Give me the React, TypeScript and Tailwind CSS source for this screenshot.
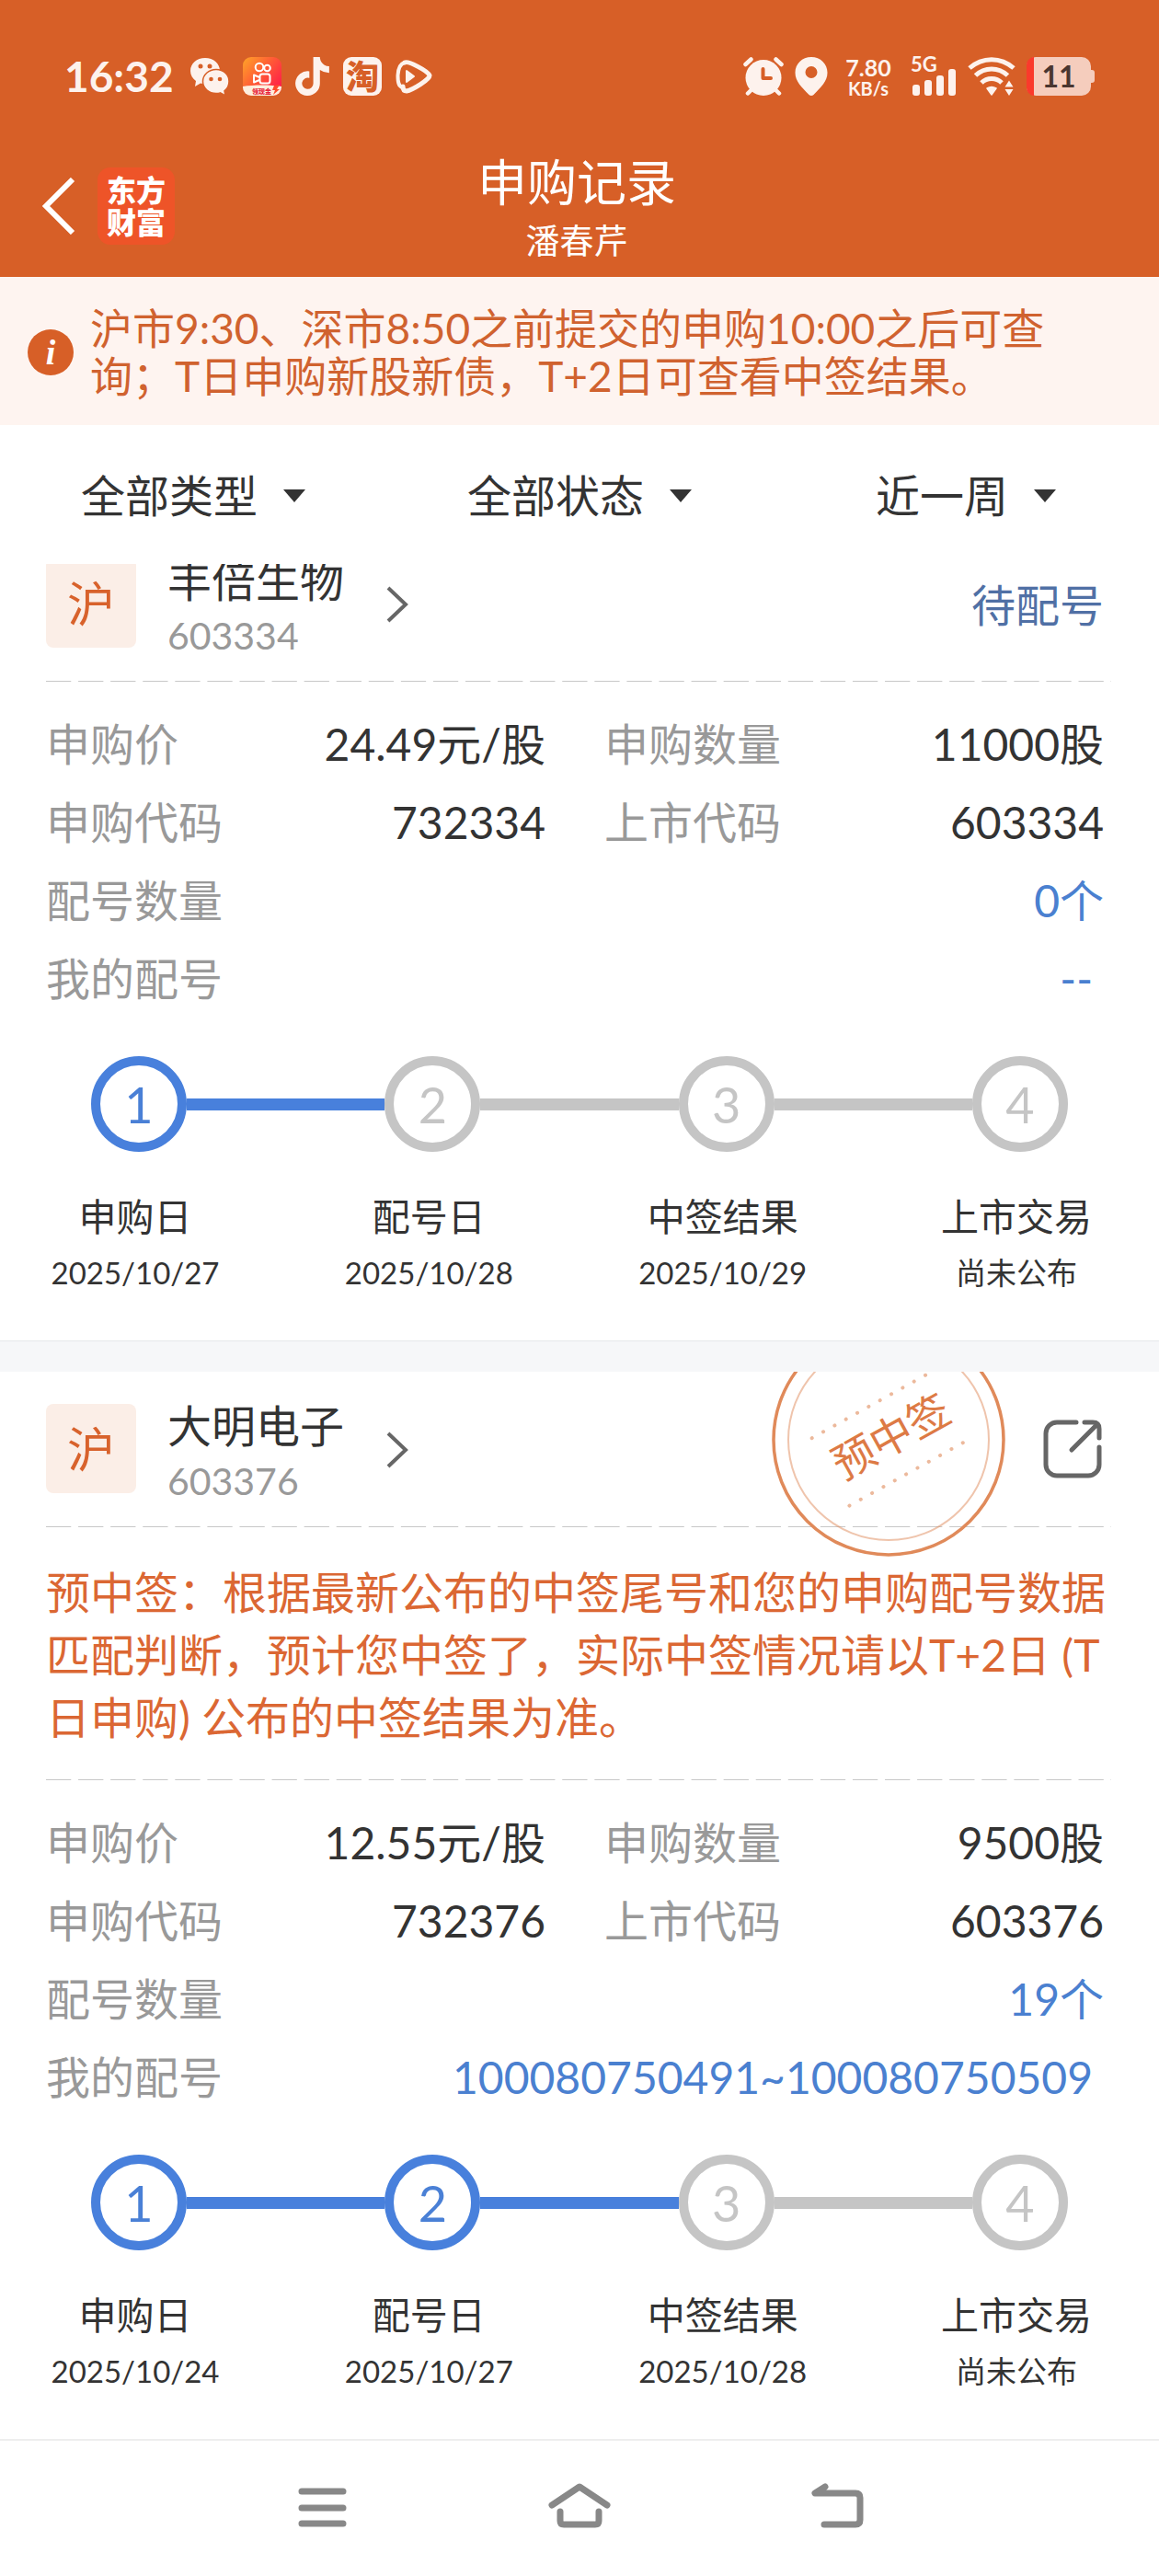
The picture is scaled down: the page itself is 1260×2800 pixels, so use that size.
import { useState } from "react";
import { FaTiktok } from "react-icons/fa6";

interface Step {
  label: string;
  date: string;
}

interface Subscription {
  name: string;
  code: string;
  price: string;
  amount: string;
  applyCode: string;
  lotCount: string;
  lots: string;
  status?: string;
  preWon?: boolean;
  notice?: string;
  currentStep: number;
  steps: Step[];
}

const subscriptions: Subscription[] = [
  {
    name: "丰倍生物",
    code: "603334",
    price: "24.49元/股",
    amount: "11000股",
    applyCode: "732334",
    lotCount: "0个",
    lots: "--",
    status: "待配号",
    currentStep: 1,
    steps: [
      { label: "申购日", date: "2025/10/27" },
      { label: "配号日", date: "2025/10/28" },
      { label: "中签结果", date: "2025/10/29" },
      { label: "上市交易", date: "尚未公布" },
    ],
  },
  {
    name: "大明电子",
    code: "603376",
    price: "12.55元/股",
    amount: "9500股",
    applyCode: "732376",
    lotCount: "19个",
    lots: "100080750491~100080750509",
    preWon: true,
    notice:
      "预中签：根据最新公布的中签尾号和您的申购配号数据匹配判断，预计您中签了，实际中签情况请以T+2日 (T日申购) 公布的中签结果为准。",
    currentStep: 2,
    steps: [
      { label: "申购日", date: "2025/10/24" },
      { label: "配号日", date: "2025/10/27" },
      { label: "中签结果", date: "2025/10/28" },
      { label: "上市交易", date: "尚未公布" },
    ],
  },
];

const filters = [
  { label: "类型", options: ["全部类型", "新股", "新债"] },
  { label: "状态", options: ["全部状态", "待配号", "已中签"] },
  { label: "时间", options: ["近一周", "近一月", "近一年"] },
];

function WechatIcon() {
  return (
    <svg viewBox="0 0 42 42" className="size-[42px]">
      <path d="M16 1C7 1 0 7 0 15c0 4.500 2.300 8.300 6 11l-1 6 6-3.500c1.600.4 3.300.5 5 .5 9 0 16-6 16-14S25 1 16 1z" fill="#fdf2ed" />
      <path d="M28 13.500c-8 0-14.500 5.700-14.500 13S20 39.500 28 39.500c1.500 0 3-.2 4.400-.6l5.600 3-1-5c3-2.400 5-6 5-10.400 0-7.300-6-13-14-13z" fill="#fdf2ed" stroke="#d75f27" strokeWidth="1.500" />
      <g fill="#d75f27">
        <circle cx="11" cy="10" r="2.500" />
        <circle cx="21" cy="10" r="2.500" />
        <circle cx="22.500" cy="24" r="2.300" />
        <circle cx="32" cy="24" r="2.300" />
      </g>
    </svg>
  );
}

function KuaishouIcon() {
  return (
    <svg viewBox="0 0 42 42" className="size-[42px]">
      <defs>
        <linearGradient id="ks" x1="0" y1="0" x2="1" y2="0.800">
          <stop offset="0" stopColor="#ffa628" />
          <stop offset="0.500" stopColor="#ff5a36" />
          <stop offset="1" stopColor="#ff1a4a" />
        </linearGradient>
      </defs>
      <rect width="42" height="42" rx="9" fill="url(#ks)" />
      <path d="M0 32c12-2 30-2 42 0v1a9 9 0 0 1-9 9H9a9 9 0 0 1-9-9z" fill="#fdeedd" />
      <g fill="none" stroke="#fff" strokeWidth="2">
        <circle cx="18" cy="11" r="4.300" />
        <circle cx="26.500" cy="12" r="3.300" />
        <rect x="18.500" y="18.500" width="11" height="10" rx="2.500" />
        <path d="M18 22l-6-2.500v8l6-2.500" strokeLinejoin="round" />
      </g>
      <text x="10" y="40" fontSize="7" fontWeight="900" fill="#e8273c">领现金</text>
      <path d="M34 31l6-1-3 5h3l-7 6 2-5h-3z" fill="#ff4a2c" />
    </svg>
  );
}

function VideoIcon() {
  return (
    <svg viewBox="0 0 40 38" className="h-[38px] w-10" fill="none" stroke="#fdf2ed" strokeWidth="5" strokeLinejoin="round" strokeLinecap="round">
      <path d="M10 4c4-2 25 9 27 14 1 4-19 16-25 17-3 0-4-2-4-5" />
      <path d="M10 4C6 5 3 9 2.500 18c0 8 1 12 5 13" strokeWidth="4" />
      <path d="M12 13v12l8-6z" fill="#fdf2ed" strokeWidth="2" />
    </svg>
  );
}

function AlarmIcon() {
  return (
    <svg viewBox="0 0 44 42" className="h-[42px] w-11" fill="none" stroke="#fdf2ed" strokeWidth="4.500" strokeLinecap="round">
      <circle cx="22" cy="22.500" r="19.500" fill="#fdf2ed" stroke="none" />
      <path d="M2.500 8l6-5.500M41.500 8l-6-5.500M5 39.500l4-4M39 39.500l-4-4" />
      <path d="M21.500 13v10h8.500" stroke="#d75f27" strokeWidth="4" strokeLinejoin="round" />
    </svg>
  );
}

function PinIcon() {
  return (
    <svg viewBox="0 0 36 42" className="h-[42px] w-9">
      <path fillRule="evenodd" d="M18 0C8 0 .5 7.500.5 17c0 9.500 7 15.500 15 24 1.500 1.300 3.500 1.300 5 0 8-8.500 15-14.500 15-24C35.500 7.500 28 0 18 0zm0 10a6.500 6.500 0 1 1 0 13 6.500 6.500 0 0 1 0-13z" fill="#fdf2ed" />
    </svg>
  );
}

function SignalIcon() {
  return (
    <svg viewBox="0 0 50 42" className="h-[42px] w-[50px] overflow-visible" fill="#fdf2ed">
      <text x="0" y="16" fontSize="22" fontWeight="700">5G</text>
      <rect x="2" y="30" width="8" height="12" rx="3" />
      <rect x="15" y="25" width="8" height="17" rx="3" />
      <rect x="28" y="20" width="8" height="22" rx="3" />
      <rect x="41" y="13" width="8" height="29" rx="3" />
    </svg>
  );
}

function WifiIcon() {
  return (
    <svg viewBox="0 0 52 42" className="h-[42px] w-[52px]" fill="none" stroke="#fdf2ed" strokeWidth="5">
      <path d="M2 12C16-.5 36-.5 50 12" />
      <path d="M8.500 20c10-9.500 25-9.500 35 0" />
      <path d="M15 28c6-6 16-6 22 0" />
      <path d="M21 34q5-3 10 0l-5 7z" fill="#fdf2ed" strokeWidth="1.500" strokeLinejoin="round" />
      <path d="M40.500 32.500l4.500-7 4.500 7zM40.500 35l4.500 7 4.500-7z" fill="#fdf2ed" stroke="none" />
    </svg>
  );
}

function BatteryIcon() {
  return (
    <svg viewBox="0 0 74 42" className="h-[42px] w-[74px]">
      <path d="M69 14h2a3 3 0 0 1 3 3v8a3 3 0 0 1-3 3h-2z" fill="#f5cdbd" />
      <rect width="70" height="42" rx="10" fill="#f5cdbd" />
      <path d="M8 0h-1a9 9 0 0 0-7 9v24a9 9 0 0 0 7 9h1z" fill="#fa3a2c" />
      <text x="35" y="33" fontSize="32" fontWeight="700" textAnchor="middle" fill="#4a3630">11</text>
    </svg>
  );
}

function StatusBar() {
  return (
    <div className="flex h-[166px] items-center justify-between px-[70px]">
      <div className="flex items-center gap-[15px]">
        <span className="w-[122px] text-[46px] leading-none font-bold">16:32</span>
        <WechatIcon />
        <KuaishouIcon />
        <FaTiktok className="h-[42px] w-[37px]" />
        <span className="flex size-[42px] items-center justify-center rounded-[9px] bg-[#fdf2ed] text-[36px] leading-none font-black text-[#d75f27]">
          淘
        </span>
        <VideoIcon />
      </div>
      <div className="flex items-center gap-3">
        <AlarmIcon />
        <PinIcon />
        <div className="mr-2 ml-1.5 w-[52px] text-center font-bold">
          <div className="text-[25px] leading-[25px]">7.80</div>
          <div className="text-[20px] leading-[20px]">KB/s</div>
        </div>
        <SignalIcon />
        <WifiIcon />
        <BatteryIcon />
      </div>
    </div>
  );
}

function Header() {
  return (
    <header className="bg-[#d75f27] text-[#fdf2ed]">
      <StatusBar />
      <div className="grid h-[135px] grid-cols-[1fr_auto_1fr] pr-[50px] pl-11 text-white">
        <div className="flex items-start gap-6 pt-4">
          <button type="button" aria-label="返回" className="flex h-[84px] items-center">
            <svg viewBox="0 0 38 62" className="h-[62px] w-[38px]" fill="none" stroke="currentColor" strokeWidth="6">
              <path d="M35 2L6 31l29 29" />
            </svg>
          </button>
          <div className="flex size-[84px] items-center justify-center rounded-[14px] bg-[#ee5428] text-[32px] leading-[35px] font-black">
            <div>
              东方
              <br />
              财富
            </div>
          </div>
        </div>
        <div className="text-center">
          <h1 className="text-[54px] leading-[66px]">申购记录</h1>
          <p className="mt-1 text-[37px] leading-[52px]">潘春芹</p>
        </div>
      </div>
    </header>
  );
}

function Divider() {
  return (
    <div className="-mr-2 h-px bg-[linear-gradient(90deg,#c8c8c8_0_77%,transparent_77%)] bg-size-[35px_1px] bg-repeat-round" />
  );
}

function Stamp() {
  return (
    <svg viewBox="0 0 256 256" className="pointer-events-none absolute -top-[54px] right-[166px] size-64" fill="none" stroke="#e08a5a">
      <circle cx="128" cy="128" r="125" strokeWidth="3.500" />
      <circle cx="128" cy="128" r="109" strokeWidth="2" opacity="0.500" />
      <g transform="rotate(-29 128 128)">
        <path d="M56 86h146M56 170h146" strokeWidth="4" strokeDasharray="0.100 14" strokeLinecap="round" opacity="0.600" />
        <text x="132" y="143" fontSize="46" textAnchor="middle" fill="#dd7a45" stroke="none">预中签</text>
      </g>
    </svg>
  );
}

function Field({ label, value, className = "text-[#333]" }: { label: string; value: string; className?: string }) {
  return (
    <div className="flex h-[85px] items-center justify-between">
      <dt className="text-[#999]">{label}</dt>
      <dd className={className}>{value}</dd>
    </div>
  );
}

function Stepper({ steps, current }: { steps: Step[]; current: number }) {
  return (
    <>
      <div className="mt-[42px] flex items-center pr-[39px] pl-[49px]">
        {steps.map((step, i) => (
          <div key={step.label} className={i > 0 ? "flex flex-1 items-center" : "flex items-center"}>
            {i > 0 && <div className={`h-[13px] flex-1 ${i <= current ? "bg-[#4880dc]" : "bg-[#c5c5c5]"}`} />}
            <div
              className={`flex size-[104px] items-center justify-center rounded-full border-10 text-[54px] ${
                i < current ? "border-[#4880dc] text-[#4a80d6]" : "border-[#c5c5c5] text-[#c5c5c5]"
              }`}
            >
              {i + 1}
            </div>
          </div>
        ))}
      </div>
      <ol className="mt-[47px] -mr-0.5 flex justify-between text-center text-[#333]">
        {steps.map((step) => (
          <li key={step.label} className="w-[194px]">
            <div className="text-[41px] leading-[48px]">{step.label}</div>
            <div className="mt-[14px] text-[33px] leading-[44px]">{step.date}</div>
          </li>
        ))}
      </ol>
    </>
  );
}

function SubscriptionCard({ item }: { item: Subscription }) {
  return (
    <article className="relative overflow-hidden bg-white pt-[35px] pr-[60px] pb-[52px] pl-[50px]">
      <div className="flex h-[133px] items-start justify-between">
        <button type="button" className="flex items-start text-left">
          <span className="flex h-[97px] w-[98px] items-center justify-center rounded-lg bg-[#fbeee7] text-[52px] leading-none text-[#d8622c]">
            沪
          </span>
          <span className="ml-[34px] block">
            <span className="block text-[48px] leading-[48px] text-[#333]">{item.name}</span>
            <span className="mt-3 block text-[41px] leading-[48px] text-[#999]">{item.code}</span>
          </span>
          <svg viewBox="0 0 26 40" className="mt-[30px] ml-[45px] h-10 w-[26px]" fill="none" stroke="#666" strokeWidth="4">
            <path d="M3 2l19 18L3 38" />
          </svg>
        </button>
        {item.status && <span className="mt-[18px] text-[48px] leading-[66px] text-[#5070a5]">{item.status}</span>}
        {item.preWon && (
          <button type="button" aria-label="分享" className="mt-4">
            <svg viewBox="0 0 66 66" className="size-[66px]" fill="none" stroke="#666" strokeWidth="5">
              <path d="M36 4H15A12 12 0 0 0 3 16v34a12 12 0 0 0 12 12h34a12 12 0 0 0 12-12V31" strokeLinecap="round" />
              <path d="M45 4h9q7 0 7 7v10M58 7L31 34" strokeLinecap="round" strokeLinejoin="round" />
            </svg>
          </button>
        )}
      </div>
      <Divider />
      {item.preWon && <Stamp />}
      {item.notice && (
        <>
          <p className="mt-[37px] -mr-2 mb-[33px] text-[48px] leading-[68px] text-[#db6733]">{item.notice}</p>
          <Divider />
        </>
      )}
      <dl className="mt-[25px] text-[48px] leading-[66px]">
        <div className="grid grid-cols-2 gap-x-16">
          <Field label="申购价" value={item.price} />
          <Field label="申购数量" value={item.amount} />
          <Field label="申购代码" value={item.applyCode} />
          <Field label="上市代码" value={item.code} />
        </div>
        <Field label="配号数量" value={item.lotCount} className="text-[#4a80d0]" />
        <Field label="我的配号" value={item.lots} className="pr-3 text-[#4a80d0]" />
      </dl>
      <Stepper steps={item.steps} current={item.currentStep} />
    </article>
  );
}

export default function App() {
  const [selected, setSelected] = useState(filters.map((f) => f.options[0]));

  return (
    <div className="bg-white font-['Lato','Noto_Sans_CJK_SC',sans-serif]" lang="zh-CN">
      <Header />

      <div className="flex items-center gap-[18px] bg-[#fef4f0] pt-[30px] pr-[80px] pb-[27px] pl-[30px] text-[#d0622f]">
        <svg viewBox="0 0 50 50" className="size-[50px] shrink-0">
          <circle cx="25" cy="25" r="25" fill="#d75f27" />
          <text x="25" y="38" fontSize="38" fontWeight="700" fontStyle="italic" fontFamily="Liberation Serif, serif" textAnchor="middle" fill="#fff">i</text>
        </svg>
        <p className="text-[46px] leading-[52px]">
          沪市9:30、深市8:50之前提交的申购10:00之后可查询；T日申购新股新债，T+2日可查看中签结果。
        </p>
      </div>

      <div className="grid h-[151px] grid-cols-3 pt-0.5">
        {filters.map((filter, i) => (
          <label key={filter.label} className="flex items-center justify-center gap-7 text-[48px] text-[#333]">
            <select
              aria-label={filter.label}
              value={selected[i]}
              onChange={(e) => setSelected((prev) => prev.map((v, j) => (j === i ? e.target.value : v)))}
              className="field-sizing-content appearance-none leading-[66px] outline-none"
            >
              {filter.options.map((o) => (
                <option key={o}>{o}</option>
              ))}
            </select>
            <svg viewBox="0 0 24 14" className="h-[14px] w-6" fill="#333">
              <path d="M0 0h24L12 14z" />
            </svg>
          </label>
        ))}
      </div>

      {/* list is scrolled a little, so the first card is cut at its top */}
      <main className="overflow-hidden">
        <div className="-mt-[41px]">
          {subscriptions.map((item, i) => (
            <div key={item.code}>
              {i > 0 && <div className="h-[34px] border-t border-[#e6e8eb] bg-[#f6f7f9]" />}
              <SubscriptionCard item={item} />
            </div>
          ))}
        </div>
      </main>

      <nav className="flex h-[148px] items-center justify-center gap-[210px] border-t-2 border-[#eee] text-[#888]">
        <button type="button" aria-label="菜单">
          <svg viewBox="0 0 70 60" className="h-[60px] w-[70px]" fill="none" stroke="currentColor" strokeWidth="7" strokeLinecap="round">
            <path d="M13 12h45M13 30h45M13 47h45" />
          </svg>
        </button>
        <button type="button" aria-label="主页">
          <svg viewBox="0 0 70 60" className="h-[60px] w-[70px]" fill="none" stroke="currentColor" strokeWidth="7" strokeLinecap="round" strokeLinejoin="round">
            <path d="M5 27L35 7l30 20M14 34v10q0 4 4 4h34q4 0 4-4V34" />
          </svg>
        </button>
        <button type="button" aria-label="后退">
          <svg viewBox="0 0 70 60" className="h-[60px] w-[70px]" fill="none" stroke="currentColor" strokeWidth="7" strokeLinecap="round" strokeLinejoin="round">
            <path d="M22 7l-11 7h44q5 0 5 5v24q0 5-5 5H21" />
          </svg>
        </button>
      </nav>
    </div>
  );
}
